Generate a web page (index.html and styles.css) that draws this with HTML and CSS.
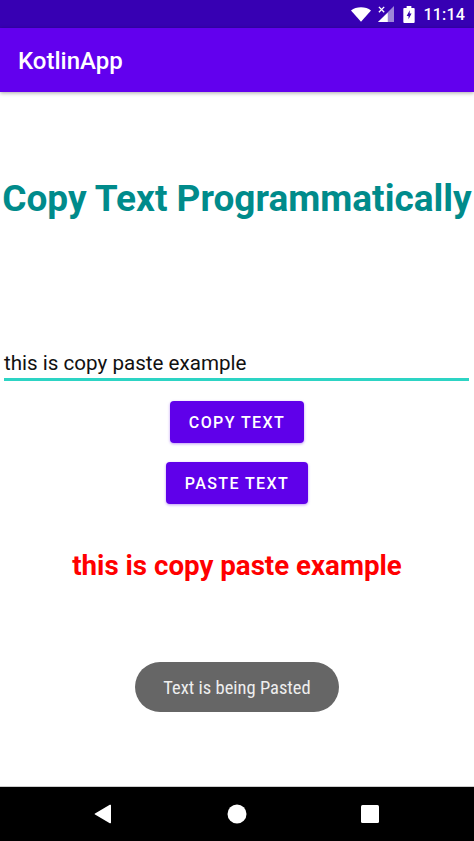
FILE: index.html
```html
<!DOCTYPE html>
<html lang="en">
<head>
    <meta charset="UTF-8">
    <meta name="viewport" content="width=device-width, initial-scale=1.0">
    <title>KotlinApp</title>
    <link rel="stylesheet" href="styles.css">
</head>
<body>
    <div class="screen">
        <!-- Status bar -->
        <div class="status-bar">
            <svg class="icon-wifi" width="20" height="15" viewBox="0 0 22 16">
                <path d="M0 3.600C3 1.200 6.800 0 11 0s8 1.200 11 3.600L11 16z" fill="#fff"/>
            </svg>
            <svg class="icon-signal" width="16" height="16" viewBox="0 0 18 18">
                <path d="M18 0v18H0z" fill="#9d86d8"/>
                <path d="M11 7.500V18H0z" fill="#fff"/>
                <path d="M1 1l6 6M7 1L1 7" stroke="#fff" stroke-width="1.500"/>
            </svg>
            <svg class="icon-battery" width="12" height="17" viewBox="0 0 12 18">
                <path d="M3.500 0h5v2H11a1 1 0 0 1 1 1v14a1 1 0 0 1-1 1H1a1 1 0 0 1-1-1V3a1 1 0 0 1 1-1h2.500z" fill="#fff"/>
                <path d="M6.800 4.500L3.500 10.500h2v3.500l3.200-6h-2z" fill="#3700b3"/>
            </svg>
            <span class="clock">11:14</span>
        </div>

        <!-- App bar -->
        <div class="app-bar">KotlinApp</div>

        <!-- Content -->
        <div class="content">
            <h1 class="title">Copy Text Programmatically</h1>
            <div class="field">this is copy paste example</div>
            <div class="buttons">
                <button class="btn">Copy Text</button>
                <button class="btn">Paste Text</button>
            </div>
            <p class="result">this is copy paste example</p>
            <div class="toast">Text is being Pasted</div>
        </div>

        <!-- Navigation bar -->
        <div class="nav-bar">
            <svg width="18" height="20" viewBox="0 0 18 20"><path d="M17 1.500V18.500a.8.8 0 0 1-1.200.7L1 10.600a.7.7 0 0 1 0-1.200L15.800.8a.8.8 0 0 1 1.200.7z" fill="#fff"/></svg>
            <svg width="20" height="20" viewBox="0 0 20 20"><circle cx="10" cy="10" r="9.500" fill="#fff"/></svg>
            <svg width="18" height="18" viewBox="0 0 18 18"><rect width="18" height="18" rx="1.500" fill="#fff"/></svg>
        </div>
    </div>
</body>
</html>
```

FILE: styles.css
```css
html, body {
    margin: 0;
    padding: 0;
}
body {
    font-family: Roboto, "Liberation Sans", sans-serif;
    background-color: #fff;
}
.screen {
    display: flex;
    flex-direction: column;
    height: 841px;
    overflow: hidden;
}
.status-bar {
    display: flex;
    align-items: center;
    justify-content: flex-end;
    flex: 0 0 28px;
    padding-right: 9px;
    background-color: #3700b3;
    color: #fff;
    box-sizing: border-box;
}
.icon-wifi {
    margin-right: 7px;
}
.icon-signal {
    margin-right: 9px;
}
.icon-battery {
    margin-right: 8px;
}
.clock {
    font-size: 16px;
    font-weight: 500;
    letter-spacing: 0.2px;
}
.app-bar {
    display: flex;
    align-items: center;
    flex: 0 0 64px;
    padding: 2px 0 0 18px;
    background-color: #6200ee;
    color: #fff;
    font-size: 24px;
    font-weight: 500;
    box-shadow: 0 1px 4px rgba(0, 0, 0, 0.35);
    position: relative;
    box-sizing: border-box;
}
.content {
    flex: 1;
    display: flex;
    flex-direction: column;
    align-items: center;
    position: relative;
}
.title {
    margin: 85px 0 0;
    font-size: 37px;
    line-height: 44px;
    font-weight: 700;
    color: #008b8b;
    white-space: nowrap;
}
.field {
    align-self: stretch;
    margin: 128px 5px 0 4px;
    height: 32px;
    line-height: 29px;
    font-size: 20.6px;
    color: #111;
    border-bottom: 3px solid #2dd4c4;
    box-sizing: border-box;
}
.buttons {
    display: flex;
    flex-direction: column;
    align-items: center;
    gap: 19px;
    margin-top: 20px;
}
.btn {
    height: 42px;
    padding: 0 19px;
    border: none;
    border-radius: 4px;
    background-color: #5f00ea;
    color: #fff;
    font-family: inherit;
    font-size: 16px;
    font-weight: 500;
    letter-spacing: 1.4px;
    text-transform: uppercase;
    box-shadow: 0 1px 3px rgba(98, 0, 238, 0.4);
}
.result {
    margin: 45px 0 0;
    font-size: 27.7px;
    line-height: 34px;
    font-weight: 700;
    color: #f00;
}
.toast {
    position: absolute;
    left: 135px;
    top: 570px;
    width: 204px;
    height: 50px;
    line-height: 52px;
    border-radius: 25px;
    background-color: #666;
    color: #eee;
    font-size: 18.5px;
    text-align: center;
    font-stretch: condensed;
}
.nav-bar {
    display: flex;
    align-items: center;
    flex: 0 0 55px;
    background-color: #000;
    border-top: 1px solid #ccc;
    box-sizing: border-box;
    justify-content: space-between;
    padding: 0 95px 0 94px;
}
```
